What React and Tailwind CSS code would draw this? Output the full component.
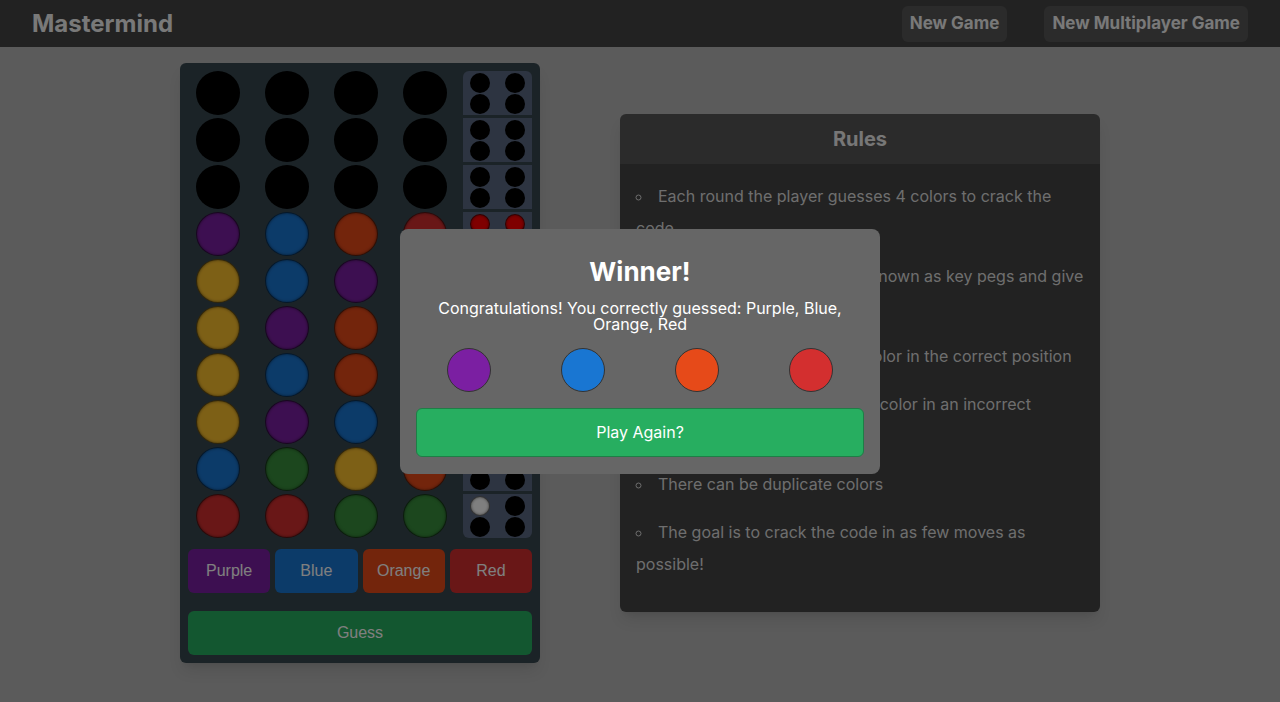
const COLORS = {
  P: "bg-[#7b1fa2]",
  B: "bg-[#1976d2]",
  O: "bg-[#e64a19]",
  R: "bg-[#d32f2f]",
  Y: "bg-[#fbc02d]",
  G: "bg-[#388e3c]",
  E: "bg-black",
};

const KEYS = {
  R: "bg-[#ff0000]",
  W: "bg-[#ffffff]",
  E: "bg-black",
};

const ROWS = [
  { pegs: "EEEE", keys: "EEEE" },
  { pegs: "EEEE", keys: "EEEE" },
  { pegs: "EEEE", keys: "EEEE" },
  { pegs: "PBOR", keys: "RRRR" },
  { pegs: "YBPO", keys: "RWWE" },
  { pegs: "YPOR", keys: "RRWE" },
  { pegs: "YBOG", keys: "RREE" },
  { pegs: "YPBG", keys: "WWEE" },
  { pegs: "BGYO", keys: "WWEE" },
  { pegs: "RRGG", keys: "WEEE" },
];

const RULES = [
  "Each round the player guesses 4 colors to crack the code.",
  "The red and white pegs are known as key pegs and give feedback after each guess",
  "A red peg means a correct color in the correct position",
  "A white peg means a correct color in an incorrect position",
  "There can be duplicate colors",
  "The goal is to crack the code in as few moves as possible!",
];

function Peg({ color }) {
  return (
    <div
      className={`w-11 h-11 rounded-full border border-black/60 shadow-[inset_0_0_3px_rgba(0,0,0,0.5)] ${COLORS[color]}`}
    />
  );
}

function KeyBlock({ keys, index, total }) {
  const rounded =
    index === 0 ? "rounded-t-md" : index === total - 1 ? "rounded-b-md" : "";
  return (
    <div
      className={`ml-4 w-[69px] h-11 bg-[#5a6882] grid grid-cols-2 content-center gap-y-px px-[7px] justify-between ${rounded}`}
    >
      {keys.split("").map((k, i) => (
        <div
          key={i}
          className={`w-5 h-5 rounded-full border border-black/60 shadow-[inset_0_0_3px_rgba(0,0,0,0.5)] ${KEYS[k]} ${
            i % 2 === 1 ? "justify-self-end" : ""
          }`}
        />
      ))}
    </div>
  );
}

function Board() {
  return (
    <div className="w-[360px] h-[600px] bg-[#37474f] rounded-md shadow-lg p-2 flex flex-col">
      <div className="flex flex-col gap-[3px]">
        {ROWS.map((row, i) => (
          <div key={i} className="flex items-center pl-2">
            <div className="flex gap-[25px]">
              {row.pegs.split("").map((c, j) => (
                <Peg key={j} color={c} />
              ))}
            </div>
            <KeyBlock keys={row.keys} index={i} total={ROWS.length} />
          </div>
        ))}
      </div>
      <div className="mt-[11px] grid grid-cols-4 gap-[5px] font-['Liberation_Sans',Arial,sans-serif] text-white text-base">
        <button className="h-11 rounded-md bg-[#7b1fa2]">Purple</button>
        <button className="h-11 rounded-md bg-[#1976d2]">Blue</button>
        <button className="h-11 rounded-md bg-[#e64a19]">Orange</button>
        <button className="h-11 rounded-md bg-[#d32f2f]">Red</button>
      </div>
      <button className="mt-[18px] h-11 rounded-md bg-[#27ae60] text-white text-base font-['Liberation_Sans',Arial,sans-serif]">
        Guess
      </button>
    </div>
  );
}

function Rules() {
  return (
    <div className="w-[480px] rounded-md overflow-hidden shadow-lg">
      <div className="h-[50px] bg-[#565656] flex items-center justify-center text-[20px] font-bold text-[#eeeeee]">
        Rules
      </div>
      <ul className="bg-[#444444] p-4 list-[circle] list-inside text-base leading-8 text-[#dddddd]">
        {RULES.map((r, i) => (
          <li key={i} className="mb-4">
            {r}
          </li>
        ))}
      </ul>
    </div>
  );
}

function WinnerModal() {
  const code = ["P", "B", "O", "R"];
  return (
    <div className="fixed inset-0 flex items-center justify-center">
      <div className="w-[480px] bg-[#666666] rounded-lg px-4 pt-[26px] pb-[17px] text-white text-center">
        <h2 className="text-[26px] font-bold leading-8 mt-px">Winner!</h2>
        <p className="mt-[12px] text-base leading-4">
          Congratulations! You correctly guessed: Purple, Blue, Orange, Red
        </p>
        <div className="mt-4 w-[456px] -mx-1 grid grid-cols-4 justify-items-center">
          {code.map((c, i) => (
            <div
              key={i}
              className={`w-11 h-11 rounded-full border border-[#333] ${COLORS[c]}`}
            />
          ))}
        </div>
        <button className="mt-4 w-full h-[49px] rounded-md bg-[#27ae60] border border-[#1e7e46] text-base">
          Play Again?
        </button>
      </div>
    </div>
  );
}

export default function App() {
  return (
    <div className="h-[702px] overflow-hidden bg-[#b6b6b6] font-['Inter',sans-serif]">
      <header className="h-[47px] bg-[#444444] flex items-center justify-between px-8">
        <h1 className="text-[24px] font-bold text-[#f2f2f2]">Mastermind</h1>
        <nav className="flex gap-[37px] items-center">
          <button className="h-9 px-2 rounded-md bg-[#565656] text-[17px] font-bold text-[#f2f2f2]">
            New Game
          </button>
          <button className="h-9 px-2 rounded-md bg-[#565656] text-[17px] font-bold text-[#f2f2f2]">
            New Multiplayer Game
          </button>
        </nav>
      </header>
      <main className="pt-4 flex justify-center items-center gap-20">
        <Board />
        <Rules />
      </main>
      <div className="fixed inset-0 bg-black/50" />
      <WinnerModal />
    </div>
  );
}
